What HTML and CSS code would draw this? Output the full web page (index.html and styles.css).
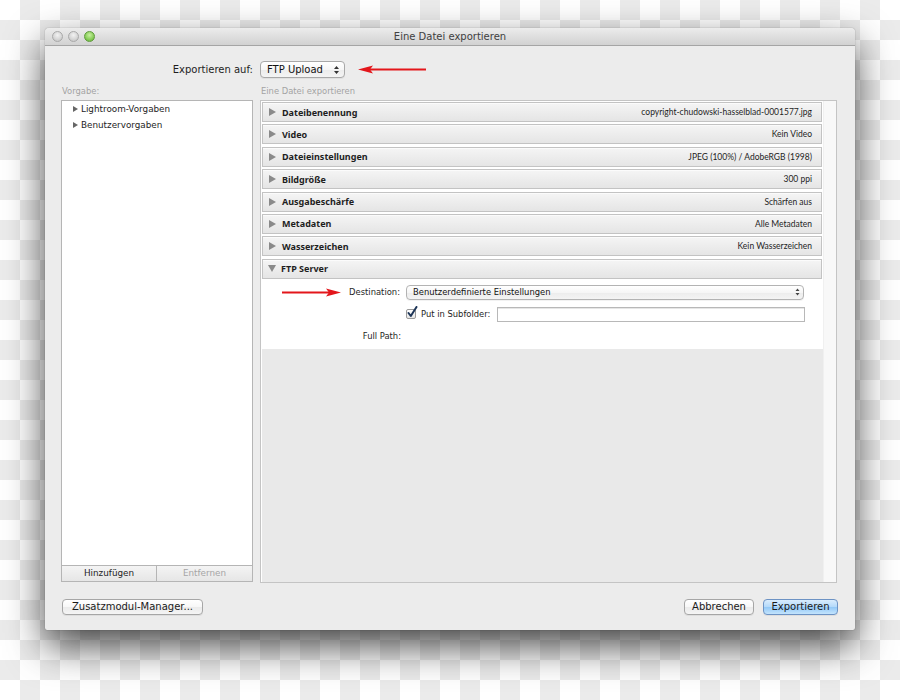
FILE: index.html
```html
<!DOCTYPE html>
<html lang="de">
<head>
<meta charset="utf-8">
<title>Eine Datei exportieren</title>
<link rel="stylesheet" href="styles.css">
</head>
<body>
<div class="window">
  <div class="titlebar">
    <div class="lights">
      <span class="light"></span>
      <span class="light"></span>
      <span class="light green"></span>
    </div>
    <div class="title">Eine Datei exportieren</div>
    <div></div>
  </div>
  <div class="content">
    <div class="top-row">
      <div class="export-label">Exportieren auf:</div>
      <div class="top-right">
        <div class="popup popup-ftp">
          <span>FTP Upload</span>
          <svg class="updown" width="5" height="8" viewBox="0 0 5 8"><path d="M2.5 0 L5 3 L0 3 Z M0 5 L5 5 L2.5 8 Z" fill="#333"/></svg>
        </div>
        <svg class="arrow arrow-left" width="68" height="9" viewBox="0 0 68 9"><path d="M12 4.5 H68" stroke="#e3161b" stroke-width="2"/><path d="M0 4.5 L15 0.5 L12 4.5 L15 8.5 Z" fill="#e3161b"/></svg>
      </div>
    </div>

    <div class="main">
      <div class="col">
        <div class="caption">Vorgabe:</div>
        <div class="preset-panel">
          <div class="tree">
            <div class="tree-row"><span class="tri-r small"></span>Lightroom-Vorgaben</div>
            <div class="tree-row"><span class="tri-r small"></span>Benutzervorgaben</div>
          </div>
          <div class="seg">
            <div class="seg-btn">Hinzufügen</div>
            <div class="seg-btn disabled">Entfernen</div>
          </div>
        </div>
      </div>

      <div class="col">
        <div class="caption">Eine Datei exportieren</div>
        <div class="sections-panel">
          <div class="sections">
            <div class="sec"><span class="tri-r"></span><span class="sec-name">Dateibenennung</span><span class="sec-val">copyright-chudowski-hasselblad-0001577.jpg</span></div>
            <div class="sec"><span class="tri-r"></span><span class="sec-name">Video</span><span class="sec-val">Kein Video</span></div>
            <div class="sec"><span class="tri-r"></span><span class="sec-name">Dateieinstellungen</span><span class="sec-val">JPEG (100%) / AdobeRGB (1998)</span></div>
            <div class="sec"><span class="tri-r"></span><span class="sec-name">Bildgröße</span><span class="sec-val">300 ppi</span></div>
            <div class="sec"><span class="tri-r"></span><span class="sec-name">Ausgabeschärfe</span><span class="sec-val">Schärfen aus</span></div>
            <div class="sec"><span class="tri-r"></span><span class="sec-name">Metadaten</span><span class="sec-val">Alle Metadaten</span></div>
            <div class="sec"><span class="tri-r"></span><span class="sec-name">Wasserzeichen</span><span class="sec-val">Kein Wasserzeichen</span></div>
            <div class="sec sec-open"><span class="tri-d"></span><span class="sec-name">FTP Server</span></div>
            <div class="ftp-body">
              <div class="ftp-label">
                <svg class="arrow" width="59" height="9" viewBox="0 0 59 9"><path d="M0 4.5 H47" stroke="#e3161b" stroke-width="2"/><path d="M59 4.5 L44 0.5 L47 4.5 L44 8.5 Z" fill="#e3161b"/></svg>
                <span class="lbl">Destination:</span>
              </div>
              <div class="popup popup-dest">
                <span>Benutzerdefinierte Einstellungen</span>
                <svg class="updown" width="5" height="8" viewBox="0 0 5 8"><path d="M2.5 0.5 L4.5 3 L0.5 3 Z M0.5 5 L4.5 5 L2.5 7.5 Z" fill="#444"/></svg>
              </div>
              <div class="ftp-label"></div>
              <div class="sub-row">
                <span class="check">
                  <svg width="12" height="13" viewBox="0 0 12 13"><path d="M2.5 7 L4.8 10 L10.5 1" stroke="#1d3557" stroke-width="2" fill="none" stroke-linecap="round" stroke-linejoin="round"/></svg>
                </span>
                <span class="lbl sub-lbl">Put in Subfolder:</span>
                <span class="textfield"></span>
              </div>
              <div class="ftp-label"><span class="lbl fp">Full Path:</span></div>
              <div></div>
            </div>
            <div class="fill"></div>
          </div>
          <div class="track"></div>
        </div>
      </div>
    </div>

    <div class="footer">
      <div class="btn btn-plugin">Zusatzmodul-Manager...</div>
      <div class="footer-right">
        <div class="btn btn-cancel">Abbrechen</div>
        <div class="btn btn-default">Exportieren</div>
      </div>
    </div>
  </div>
</div>
</body>
</html>
```

FILE: styles.css
```css
html, body {
  margin: 0;
  height: 100%;
}

body {
  box-sizing: border-box;
  padding: 28px 0 0 45px;
  background-color: #fff;
  background-image: conic-gradient(#ebebeb 25%, #fff 0 50%, #ebebeb 0 75%, #fff 0);
  background-size: 40px 40px;
  font-family: "DejaVu Sans", "Liberation Sans", sans-serif;
  font-size: 10px;
  color: #222;
  overflow: hidden;
}

.window {
  width: 810px;
  height: 602px;
  background: #ececec;
  border-radius: 4px 4px 2px 2px;
  box-shadow: 0 16px 38px rgba(0, 0, 0, 0.72), 0 0 1px rgba(0, 0, 0, 0.5);
  display: flex;
  flex-direction: column;
}

.titlebar {
  height: 17px;
  border-bottom: 1px solid #a5a5a5;
  border-radius: 4px 4px 0 0;
  background: linear-gradient(#ececec, #dcdcdc 60%, #d2d2d2);
  display: grid;
  grid-template-columns: 1fr auto 1fr;
  align-items: center;
}

.lights {
  display: flex;
  gap: 5px;
  padding-left: 7px;
}

.light {
  width: 9px;
  height: 9px;
  border-radius: 50%;
  border: 1px solid #a9a9a9;
  background: radial-gradient(circle at 50% 35%, #f2f2f2, #cfcfcf 70%, #bdbdbd);
}

.light.green {
  border-color: #5f9a3c;
  background: radial-gradient(circle at 50% 35%, #c8f0a0, #86cc57 60%, #62ad38);
}

.title {
  font-size: 10px;
  color: #404040;
}

.content {
  flex: 1;
  padding: 15px 18px 15px 16px;
  display: flex;
  flex-direction: column;
}

.top-row {
  display: grid;
  grid-template-columns: 192px 577px;
  column-gap: 7px;
  height: 17px;
  align-items: center;
}

.export-label {
  text-align: right;
  font-size: 10px;
  color: #1e1e1e;
}

.top-right {
  display: flex;
  align-items: center;
  gap: 13px;
}

.popup {
  box-sizing: border-box;
  display: flex;
  align-items: center;
  justify-content: space-between;
  border: 1px solid #a8a8a8;
  border-radius: 4px;
  background: linear-gradient(#ffffff, #f6f6f6 50%, #ececec 51%, #f4f4f4);
  box-shadow: 0 1px 0 rgba(0, 0, 0, 0.05);
  color: #111;
}

.popup-ftp {
  width: 85px;
  height: 17px;
  padding: 0 5px 0 6px;
  font-size: 10px;
}

.arrow {
  display: block;
  flex: none;
}

.main {
  margin-top: 7px;
  display: grid;
  grid-template-columns: 192px 577px;
  column-gap: 7px;
}

.col {
  display: flex;
  flex-direction: column;
}

.caption {
  height: 12px;
  line-height: 12px;
  margin-bottom: 3px;
  font-size: 8.4px;
  color: #a3a3a3;
  padding-left: 1px;
}

.preset-panel {
  box-sizing: border-box;
  height: 482px;
  border: 1px solid #b5b5b5;
  display: flex;
  flex-direction: column;
}

.tree {
  flex: 1;
  background: #fff;
}

.tree-row {
  height: 16px;
  line-height: 15px;
  padding-left: 11px;
  font-size: 8.8px;
  color: #1e1e1e;
  display: flex;
  align-items: center;
}

.tri-r {
  display: inline-block;
  width: 0;
  height: 0;
  border-top: 4px solid transparent;
  border-bottom: 4px solid transparent;
  border-left: 7px solid #8a8a8a;
  flex: none;
}

.tri-r.small {
  border-top-width: 3.5px;
  border-bottom-width: 3.5px;
  border-left-width: 5px;
  border-left-color: #666;
  margin-right: 3px;
}

.tri-d {
  display: inline-block;
  width: 0;
  height: 0;
  border-left: 4px solid transparent;
  border-right: 4px solid transparent;
  border-top: 7px solid #8a8a8a;
  flex: none;
}

.seg {
  height: 15px;
  border-top: 1px solid #b5b5b5;
  display: grid;
  grid-template-columns: 95px 1fr;
  background: linear-gradient(#f4f4f4, #e6e6e6);
}

.seg-btn {
  text-align: center;
  line-height: 15px;
  font-size: 8.8px;
  color: #1e1e1e;
}

.seg-btn:first-child {
  border-right: 1px solid #b5b5b5;
}

.seg-btn.disabled {
  color: #a6a6a6;
}

.sections-panel {
  box-sizing: border-box;
  height: 483px;
  border: 1px solid #c4c4c4;
  display: flex;
  background: #fff;
}

.sections {
  flex: 1;
  display: flex;
  flex-direction: column;
  padding-top: 1px;
}

.track {
  width: 12px;
  background: #f8f8f8;
  border-left: 1px solid #f0f0f0;
}

.sec {
  box-sizing: border-box;
  height: 20px;
  margin: 0 1px 2.4px 1px;
  border: 1px solid #c3c3c3;
  background: linear-gradient(#f5f5f5, #ececec 55%, #e5e5e5);
  box-shadow: inset 0 1px 0 #fbfbfb;
  display: flex;
  align-items: center;
  padding: 0 9px 0 6px;
}

.sec-name {
  margin-left: 6px;
  font-family: "Noto Sans", "DejaVu Sans", sans-serif;
  font-weight: 700;
  font-size: 9px;
  color: #1e1e1e;
}

.sec-val {
  margin-left: auto;
  font-family: Lato, "Liberation Sans", sans-serif;
  font-size: 8.5px;
  color: #1e1e1e;
}

.sec-open {
  margin-bottom: 0;
}

.sec-open .tri-d {
  margin-left: -1px;
  margin-right: -1px;
}

.ftp-body {
  display: grid;
  grid-template-columns: 139px 399px;
  grid-auto-rows: 15px;
  column-gap: 6px;
  row-gap: 7px;
  padding: 6px 0 5px 0;
  background: #fff;
  font-size: 8.4px;
  color: #1e1e1e;
}

.ftp-label {
  display: flex;
  align-items: center;
  padding-left: 21px;
}

.ftp-label .lbl {
  margin-left: auto;
}

.ftp-label .fp {
  margin-right: -1px;
}

.popup-dest {
  width: 398px;
  height: 15px;
  padding: 0 3px 0 6px;
  font-size: 8.4px;
  border-color: #b3b3b3;
}

.sub-row {
  display: flex;
  align-items: center;
}

.sub-lbl {
  white-space: nowrap;
  flex: none;
}

.check {
  position: relative;
  box-sizing: border-box;
  width: 10px;
  height: 10px;
  border: 1px solid #9a9a9a;
  border-radius: 2px;
  background: linear-gradient(#ffffff, #e6e6e6);
  margin-right: 5px;
  flex: none;
}

.check svg {
  position: absolute;
  left: -1px;
  top: -4px;
}

.textfield {
  box-sizing: border-box;
  flex: none;
  width: 308px;
  height: 15px;
  margin-left: 7px;
  border: 1px solid #b8b8b8;
  background: #fff;
  box-shadow: inset 0 1px 0 #e6e6e6;
}

.fill {
  flex: 1;
  background: #e9e9e9;
  margin-left: 1px;
}

.footer {
  margin-top: 16px;
  display: flex;
  justify-content: space-between;
  margin-right: -1px;
  padding-left: 1px;
}

.footer-right {
  display: flex;
  gap: 9px;
}

.btn {
  box-sizing: border-box;
  height: 16px;
  border: 1px solid #a6a6a6;
  border-radius: 4px;
  background: linear-gradient(#ffffff, #f7f7f7 50%, #ebebeb 51%, #f5f5f5);
  box-shadow: 0 1px 0 rgba(0, 0, 0, 0.06);
  font-size: 10px;
  line-height: 14px;
  text-align: center;
  color: #1a1a1a;
}

.btn-plugin {
  width: 141px;
}

.btn-cancel {
  width: 70px;
}

.btn-default {
  width: 75px;
  border-color: #6d93c4;
  background: linear-gradient(#d9ecfd, #b3d9fa 50%, #92c8f7 51%, #c3e4fd);
}
```
